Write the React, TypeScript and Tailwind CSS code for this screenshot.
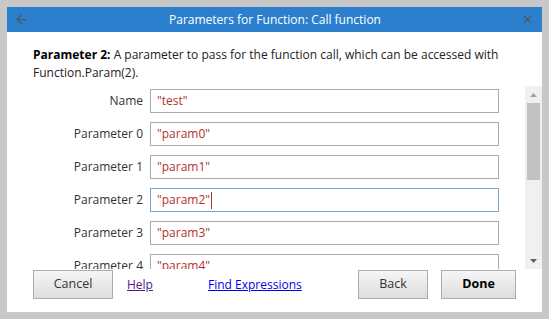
import { ArrowLeft, X } from 'lucide-react';

const rows = [
    { label: 'Name', value: '"test"' },
    { label: 'Parameter 0', value: '"param0"' },
    { label: 'Parameter 1', value: '"param1"' },
    { label: 'Parameter 2', value: '"param2"', focused: true },
    { label: 'Parameter 3', value: '"param3"' },
    { label: 'Parameter 4', value: '"param4"' },
];

const font = "font-['Open_Sans','Noto_Sans',sans-serif]";

const Button = ({ label, width, bold }: { label: string; width: string; bold?: boolean }) => (
    <button
        className={`${width} h-[29px] border border-[#acacac] bg-gradient-to-b from-[#f6f6f6] to-[#dddddd] text-[12.5px] text-[#333] ${bold ? 'font-bold text-black' : ''}`}
    >
        {label}
    </button>
);

export default function App() {
    return (
        <div className={`w-[549px] h-[319px] bg-[#c8c8c8] p-[7px] ${font}`}>
            <div className="w-[535px] h-[305px] bg-white flex flex-col">
                {/* title bar */}
                <div className="h-[25px] bg-[#2b7fcd] flex items-center pl-[7px] pr-[8px] shrink-0">
                    <ArrowLeft size={15} strokeWidth={2} className="text-[#4a5866]" />
                    <div className="flex-1 text-center text-white text-[12px] leading-none">
                        Parameters for Function: Call function
                    </div>
                    <X size={13} strokeWidth={2} className="text-[#4a5866]" />
                </div>

                {/* description */}
                <p className="pl-[26px] pr-[20px] pt-[14px] text-[12px] leading-[18px] text-[#222] h-[54px] shrink-0">
                    <span className="font-bold text-black">Parameter 2:</span> A parameter to pass for the function call, which can be accessed with Function.Param(2).
                </p>

                {/* scrolling rows */}
                <div className="h-[183px] flex shrink-0">
                    <div className="flex-1 overflow-hidden pt-[3px] flex flex-col gap-[9px]">
                        {rows.map((row) => (
                            <div key={row.label} className="flex items-center shrink-0">
                                <div className="w-[136px] text-right text-[12px] text-[#333]">{row.label}</div>
                                <div
                                    className={`ml-[7px] w-[349px] h-[24px] border flex items-center px-[6px] text-[12px] text-[#b3302e] ${row.focused ? 'border-[#7da2ce]' : 'border-[#ababab]'}`}
                                >
                                    {row.value}
                                    {row.focused && <span className="w-px h-[17px] bg-[#b3302e] ml-px" />}
                                </div>
                            </div>
                        ))}
                    </div>
                    <div className="w-[17px] bg-[#f0f0f0] flex flex-col items-center">
                        <div className="h-[17px] flex items-center justify-center">
                            <svg width="7" height="4" viewBox="0 0 7 4"><path d="M3.5 0L7 4H0z" fill="#a3a3a3" /></svg>
                        </div>
                        <div className="w-[13px] h-[77px] bg-[#c1c1c1]" />
                        <div className="flex-1" />
                        <div className="h-[17px] flex items-center justify-center">
                            <svg width="7" height="4" viewBox="0 0 7 4"><path d="M0 0h7L3.5 4z" fill="#606060" /></svg>
                        </div>
                    </div>
                </div>

                {/* footer */}
                <div className="flex items-start pt-px pl-[26px] pr-[26px] h-[43px]">
                    <Button label="Cancel" width="w-[80px]" />
                    <a className="ml-[14px] text-[12px] text-[#551a8b] underline leading-[29px]">Help</a>
                    <a className="ml-[55px] text-[12px] text-[#0000ee] underline leading-[29px]">Find Expressions</a>
                    <div className="flex-1" />
                    <Button label="Back" width="w-[70px]" />
                    <div className="ml-[13px]">
                        <Button label="Done" width="w-[75px]" bold />
                    </div>
                </div>
            </div>
        </div>
    );
}
